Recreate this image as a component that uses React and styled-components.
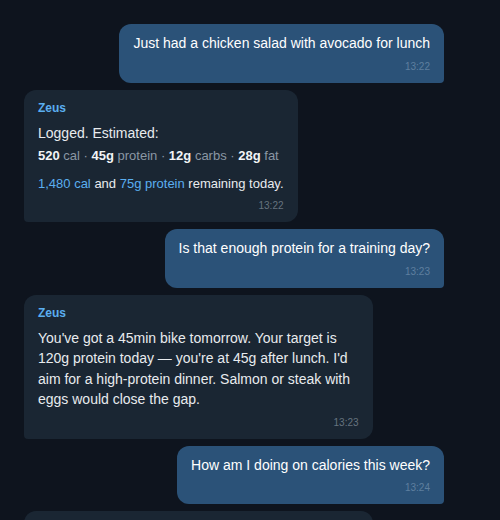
import React from 'react'
import styled, { createGlobalStyle } from 'styled-components'

const GlobalStyle = createGlobalStyle`
	html, body {
		margin: 0;
		padding: 0;
		background: #0e141e;
		overflow: hidden;
	}
	* {
		box-sizing: border-box;
	}
`

const messages = [
	{ id: 1, out: true, time: '13:22', text: 'Just had a chicken salad with avocado for lunch' },
	{ id: 2, out: false, time: '13:22', kind: 'log' },
	{ id: 3, out: true, time: '13:23', text: 'Is that enough protein for a training day?' },
	{
		id: 4,
		out: false,
		time: '13:23',
		text: "You've got a 45min bike tomorrow. Your target is 120g protein today — you're at 45g after lunch. I'd aim for a high-protein dinner. Salmon or steak with eggs would close the gap.",
	},
	{ id: 5, out: true, time: '13:24', text: 'How am I doing on calories this week?' },
	{
		id: 6,
		out: false,
		time: '13:24',
		text: "You're averaging 1,910 cal a day this week, about 90 under your target. Protein has been the weak spot on three of five days.",
	},
]

const macros = [
	{ value: '520', unit: 'cal' },
	{ value: '45g', unit: 'protein' },
	{ value: '12g', unit: 'carbs' },
	{ value: '28g', unit: 'fat' },
]

const LogBody = () => (
	<>
		<Text>Logged. Estimated:</Text>
		<MacroLine>
			{macros.map((m, i) => (
				<React.Fragment key={m.unit}>
					{i > 0 && ' · '}
					<b>{m.value}</b> {m.unit}
				</React.Fragment>
			))}
		</MacroLine>
		<Remaining>
			<Accent>1,480 cal</Accent> and <Accent>75g protein</Accent> remaining today.
		</Remaining>
	</>
)

const Message = ({ msg }) => (
	<Bubble $out={msg.out}>
		{!msg.out && <Sender>Zeus</Sender>}
		{msg.kind === 'log' ? <LogBody /> : <Text>{msg.text}</Text>}
		<Time $out={msg.out}>{msg.time}</Time>
	</Bubble>
)

export default function App() {
	return (
		<>
			<GlobalStyle />
			<Chat>
				{messages.map((m) => (
					<Message key={m.id} msg={m} />
				))}
			</Chat>
		</>
	)
}

// STYLED COMPONENTS
const Chat = styled.div`
	height: 520px;
	overflow: hidden;
	display: flex;
	flex-direction: column;
	gap: 7px;
	padding: 24px 56px 0 24px;
	font-family: 'Liberation Sans', Arial, Helvetica, sans-serif;
`
const Bubble = styled.div`
	align-self: ${(p) => (p.$out ? 'flex-end' : 'flex-start')};
	max-width: 83%;
	flex-shrink: 0;
	padding: 9px 14px 10px;
	border-radius: ${(p) => (p.$out ? '12px 12px 4px 12px' : '12px 12px 12px 4px')};
	background: ${(p) => (p.$out ? '#2b5278' : '#1a2633')};
	color: ${(p) => (p.$out ? '#ffffff' : '#e8ebee')};
`
const Sender = styled.div`
	font-size: 12px;
	font-weight: 700;
	line-height: 19px;
	color: #5aaef0;
	margin-bottom: 5px;
`
const Text = styled.div`
	font-size: 14px;
	line-height: 20.5px;
`
const MacroLine = styled.div`
	margin-top: 4px;
	font-size: 13px;
	line-height: 18px;
	color: #8b97a4;
	b {
		color: #f2f4f6;
		font-weight: 700;
	}
`
const Remaining = styled.div`
	margin-top: 10px;
	font-size: 13px;
	line-height: 18px;
`
const Accent = styled.span`
	color: #5aaef0;
`
const Time = styled.div`
	margin-top: 6px;
	text-align: right;
	font-size: 10px;
	line-height: 13px;
	color: ${(p) => (p.$out ? '#5e7f9f' : '#66737f')};
`
